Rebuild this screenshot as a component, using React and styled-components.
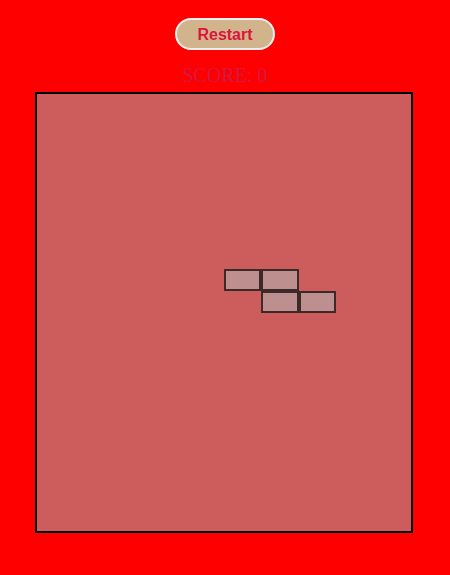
import styled, { createGlobalStyle } from "styled-components"

const COLS = 10
const ROWS = 20

// current piece: Z shape
const piece = [
    { x: 5, y: 8 },
    { x: 6, y: 8 },
    { x: 6, y: 9 },
    { x: 7, y: 9 },
]

export default function App() {
    return (
        <>
            <GlobalStyle />
            <Page>
                <RestartButton>Restart</RestartButton>
                <Score>SCORE: 0</Score>
                <Board>
                    {piece.map((cell, i) => (
                        <Block key={i} $x={cell.x} $y={cell.y} />
                    ))}
                </Board>
            </Page>
        </>
    )
}

const GlobalStyle = createGlobalStyle`
    body {
        margin: 0;
        background-color: red;
        font-family: 'Liberation Serif', serif;
    }
`
const Page = styled.div`
    display: flex;
    flex-direction: column;
    align-items: center;
    padding-top: 18px;
`
const RestartButton = styled.button`
    box-sizing: border-box;
    width: 100px;
    height: 32px;
    padding: 1px 0 0;
    border: 2px solid #eeeeee;
    border-radius: 16px;
    background-color: tan;
    color: crimson;
    font-family: 'Liberation Sans', Arial, sans-serif;
    font-weight: bold;
    font-size: 16px;
    cursor: pointer;
`
const Score = styled.div`
    margin-top: 14px;
    font-family: 'Liberation Serif', serif;
    font-size: 20px;
    line-height: 22px;
    color: #d41844;
`
const Board = styled.div`
    box-sizing: border-box;
    margin-top: 6px;
    margin-right: 2px;
    width: 378px;
    height: 441px;
    border: 2px solid black;
    background-color: indianred;
    display: grid;
    grid-template-columns: repeat(${COLS}, 1fr);
    grid-template-rows: repeat(${ROWS}, 1fr);
`
const Block = styled.div`
    grid-column: ${p => p.$x + 1};
    grid-row: ${p => p.$y + 1};
    box-sizing: border-box;
    background-color: #bd8f8f;
    border: 2px solid rgba(30, 15, 15, 0.8);
`
